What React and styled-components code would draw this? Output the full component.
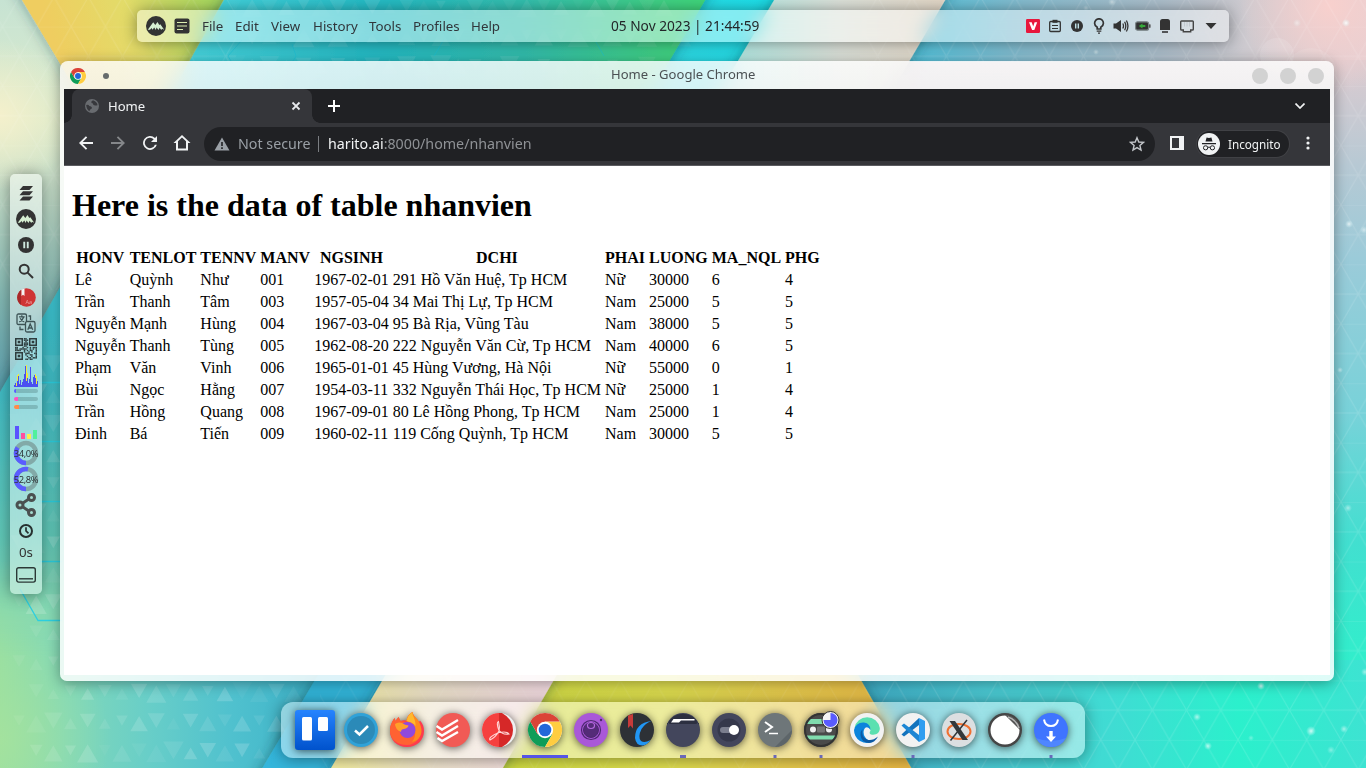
import React from 'react';
import styled, { createGlobalStyle } from 'styled-components';

const ui = '"Noto Sans", "Liberation Sans", sans-serif';
const ink = '#31363b';

const GlobalStyle = createGlobalStyle`
  html, body { margin: 0; height: 100%; overflow: hidden; }
  #root { height: 100%; }
  svg { display: block; }
`;

const Desktop = styled.div`
  position: relative;
  width: 1366px;
  height: 768px;
  overflow: hidden;
  font-family: ${ui};
`;

const Backdrop = styled.svg`
  position: absolute;
  inset: 0;
`;

const Glass = styled.div`
  position: absolute;
  display: flex;
  box-sizing: border-box;
  background: rgba(255, 255, 255, 0.44);
  backdrop-filter: blur(10px);
  box-shadow: 0 1px 16px rgba(0, 0, 0, 0.42);
`;

/* ---------- wallpaper ---------- */

const SIDE = 34.32;
const ROW = 29.72;

const noise = (a, b) => {
  const v = Math.sin(a * 127.1 + b * 311.7) * 43758.5453;
  return v - Math.floor(v);
};

const triangles = (x0, y0, x1, y1) => {
  const out = [];
  let r = 0;
  for (let y = y0; y < y1; y += ROW, r++) {
    const end = x1 - Math.max(0, y - 680) * 0.6;
    for (let x = x0 + (r % 2 ? SIDE / 2 : 0), c = 0; x < end; x += SIDE, c++) {
      const n = noise(r + 3, c + 7);
      const h = 4 + 5.5 * n;
      out.push({ d: `M${x - h * 1.15} ${y + 9 - h}h${h * 2.3}l${-h * 1.15} ${h * 2}z`, o: 0.04 + 0.13 * noise(c, r) });
      const m = noise(c + 11, r + 2);
      const k = 5 + 4.5 * m;
      const cx = x + SIDE / 2;
      out.push({ d: `M${cx - k * 1.15} ${y + 12 + k}h${k * 2.3}l${-k * 1.15} ${-k * 2}z`, o: 0.04 + 0.13 * noise(r, c + 5) });
    }
  }
  return out;
};

const leftTriangles = triangles(19, 355, 292, 768);
const topTriangles = triangles(235, -4, 680, 62);

const stars = [
  [1346, 23, 4, 0.9], [1297, 23, 4, 0.45], [1112, 2, 4, 0.5], [1086, 8, 3, 0.35], [1096, 52, 3, 0.45],
  [1349, 224, 4, 0.7], [1364, 230, 4, 0.5], [1340, 370, 3, 0.55], [1348, 508, 4, 0.5],
  [1261, 686, 4, 0.8], [1197, 717, 4, 0.6], [1208, 746, 4, 0.65], [1311, 731, 5, 0.75], [1344, 729, 4, 0.55],
  [1331, 750, 4, 0.4], [1251, 738, 3, 0.35], [1365, 672, 4, 0.5],
];

const grad = (id, x1, y1, x2, y2, stops) => (
  <linearGradient id={id} gradientUnits="userSpaceOnUse" x1={x1} y1={y1} x2={x2} y2={y2}>
    {stops.map(([o, c]) => <stop key={o} offset={o} stopColor={c} />)}
  </linearGradient>
);

function Wallpaper() {
  return (
    <Backdrop width="1366" height="768" viewBox="0 0 1366 768">
      <defs>
        {grad('wCream', 0, 0, 0, 400, [[0, '#c7e3d3'], [0.3, '#dcebcb'], [0.45, '#c9dfc9'], [0.75, '#83b9b4'], [1, '#5a9fb0']])}
        {grad('wYellow', 60, 60, 215, 10, [[0, '#efcd60'], [0.5, '#e2dc69'], [1, '#a9da60']])}
        {grad('wTeal', 200, 0, 700, 0, [[0, '#45d4de'], [0.35, '#25bcc6'], [0.65, '#33bfae'], [0.9, '#3fd088'], [1, '#3fd77c']])}
        {grad('wCyan', 670, 60, 760, 0, [[0, '#2edbe6'], [1, '#1ee0ea']])}
        {grad('wWhite', 740, 0, 940, 0, [[0, '#b5e8e2'], [0.5, '#dde2da'], [1, '#e3d8c8']])}
        {grad('wRightTop', 910, 0, 1366, 0, [[0, '#52c3dc'], [0.25, '#86bdd0'], [0.55, '#adbfcc'], [0.75, '#cfcacf'], [1, '#e4cfd3']])}
        {grad('wRight', 0, 60, 0, 768, [[0, '#dccbd0'], [0.15, '#b7c9d4'], [0.28, '#9bcbd9'], [0.5, '#78d2d9'], [0.68, '#42dfd0'], [0.86, '#30efcb'], [1, '#40e2d4']])}
        {grad('wLeftLow', 0, 300, 0, 620, [[0, '#3cc3d0'], [0.3, '#42bcc4'], [0.75, '#62c9b8'], [1, '#84d6b2']])}
        {grad('wLowRow', 0, 0, 330, 0, [[0, '#98dfa2'], [0.2, '#82d8b8'], [0.45, '#68cec8'], [0.7, '#50c1ce'], [1, '#3ab0c8']])}
        {grad('wFade', 0, 560, 0, 660, [[0, '#000'], [1, '#fff']])}
        {grad('wBlue', 300, 681, 340, 768, [[0, '#30b6da'], [1, '#36b6dc']])}
        {grad('wPale', 340, 0, 550, 0, [[0, '#f3eca2'], [0.45, '#ede2cc'], [1, '#f1d9e0']])}
        {grad('wGold', 510, 0, 905, 0, [[0, '#d0dc42'], [0.4, '#dedd50'], [0.7, '#e6ca4e'], [1, '#e9b944']])}
        {grad('wLowRight', 860, 0, 1366, 0, [[0, '#3fadc6'], [0.25, '#4bc9d3'], [0.5, '#3fdcd3'], [0.75, '#2bf0cc'], [1, '#3de3d2']])}
        <mask id="wFadeMask"><rect width="1366" height="768" fill="url(#wFade)" /></mask>
        <radialGradient id="wGlow" gradientUnits="userSpaceOnUse" cx="0" cy="115" r="75">
          <stop offset="0" stopColor="#f4f0cc" /><stop offset="1" stopColor="#f4f0cc" stopOpacity="0" />
        </radialGradient>
        <radialGradient id="wRose" gradientUnits="userSpaceOnUse" cx="1330" cy="5" r="90">
          <stop offset="0" stopColor="#f8d0cd" /><stop offset="1" stopColor="#f8d0cd" stopOpacity="0" />
        </radialGradient>
        <radialGradient id="wLime" gradientUnits="userSpaceOnUse" cx="0" cy="740" r="110">
          <stop offset="0" stopColor="#a8e39c" stopOpacity="0.7" /><stop offset="1" stopColor="#a8e39c" stopOpacity="0" />
        </radialGradient>
        <radialGradient id="wStar"><stop offset="0" stopColor="#fff" /><stop offset="1" stopColor="#dff" stopOpacity="0" /></radialGradient>
        <pattern id="wMesh" patternUnits="userSpaceOnUse" x="1341" y="621" width={SIDE} height={ROW * 2}>
          <path
            d={`M0 0H${SIDE}M0 ${ROW}H${SIDE}M0 0L${SIDE} ${ROW * 2}M${SIDE} 0L0 ${ROW * 2}`}
            stroke="#fff" strokeWidth="1" strokeOpacity="0.16" fill="none"
          />
        </pattern>
        <filter id="wShade" x="-20%" y="-20%" width="140%" height="140%">
          <feDropShadow dx="0" dy="0" stdDeviation="7" floodColor="#06343e" floodOpacity="0.42" />
        </filter>
      </defs>
      <rect width="1366" height="768" fill="url(#wRight)" />
      <path d="M890 0H1366V62H890Z" fill="url(#wRightTop)" />
      <path d="M850 660H1366V768H850Z" fill="url(#wLowRight)" />
      <rect x="1334" y="60" width="32" height="560" fill="url(#wRight)" />
      <rect x="1200" y="0" width="166" height="150" fill="url(#wRose)" />
      <path d="M0 0H300V500H0Z" fill="url(#wCream)" />
      <rect y="30" width="90" height="170" fill="url(#wGlow)" />
      <path d="M690 -20H800L700 162H580Z" fill="url(#wCyan)" />
      <g filter="url(#wShade)">
        <path d="M786 -20H957L850 162H678Z" fill="url(#wWhite)" />
      </g>
      <g filter="url(#wShade)">
        <path d="M10 -20H250L140 162H119Z" fill="url(#wYellow)" />
      </g>
      <g filter="url(#wShade)">
        <path d="M235 -20H717L610 162H133Z" fill="url(#wTeal)" />
      </g>
      <g filter="url(#wShade)">
        <path d="M-20 427L90 235H250V600H430V792H-20Z" fill="url(#wLeftLow)" />
      </g>
      <path d="M0 540H400V768H0Z" fill="url(#wLowRow)" mask="url(#wFadeMask)" />
      <rect y="630" width="110" height="138" fill="url(#wLime)" />
      <g filter="url(#wShade)">
        <path d="M339 640H560V792H248Z" fill="url(#wBlue)" />
      </g>
      <g filter="url(#wShade)">
        <path d="M540 640H838L925 792H470Z" fill="url(#wGold)" />
      </g>
      <g filter="url(#wShade)">
        <path d="M406 640H577L489 792H317Z" fill="url(#wPale)" />
      </g>
      <rect x="860" width="506" height="768" fill="url(#wMesh)" opacity="0.85" />
      <rect width="236" height="290" fill="url(#wMesh)" opacity="0.7" />
      <rect x="320" y="660" width="540" height="108" fill="url(#wMesh)" opacity="0.5" />
      {leftTriangles.map((t, i) => <path key={i} d={t.d} fill="#fff" opacity={t.o} />)}
      {topTriangles.map((t, i) => <path key={i} d={t.d} fill="#fff" opacity={t.o * 0.7} />)}
      <path d="M40 382.500H62M40 441.500H62M40 501.500H62M40 561.500H62M20 589L38 620.500H62" stroke="#2ccfe0" strokeWidth="1.300" fill="none" />
      <path d="M242 40L228 56L234 66M292 44L296 56L290 66M446 36L434 56M596 42L604 56" stroke="#17c4dc" strokeOpacity="0.5" fill="none" />
      <circle cx="1277" cy="55" r="17" fill="#fff" opacity="0.13" />
      <circle cx="1311" cy="74" r="26" fill="#fff" opacity="0.1" />
      {stars.map(([x, y, r, o]) => <circle key={`${x}-${y}`} cx={x} cy={y} r={r} fill="url(#wStar)" opacity={o} />)}
    </Backdrop>
  );
}

/* ---------- shared drawings ---------- */

const Mountain = ({ size = 20 }) => (
  <svg width={size} height={size} viewBox="0 0 20 20">
    <circle cx="10" cy="10" r="10" fill="#333" />
    <path d="M1.800 13.800L7.200 6.300L9.300 9L11.500 6L13.300 9L14.300 8.200L18.200 13.800L16 12.800L15.300 14L13.600 11.800L12.600 14L10.500 11.500L9.800 14L8.200 11.600L6.500 13.800L5.600 12L4 13.800Z" fill="#d7efd2" />
  </svg>
);

const PauseDisc = ({ size = 16, tint = '#cfe8de' }) => (
  <svg width={size} height={size} viewBox="0 0 16 16">
    <circle cx="8" cy="8" r="8" fill="#333" />
    <path d="M5.300 4.800h1.900v6.400H5.300zM8.800 4.800h1.900v6.400H8.800z" fill={tint} />
  </svg>
);

const ChromeLogo = ({ size }) => (
  <svg width={size} height={size} viewBox="0 0 48 48">
    <circle cx="24" cy="24" r="24" fill="#fff" />
    <path d="M3.200 12A24 24 0 0 0 24 48L34.400 30L24 24L13.600 30Z" fill="#0f9d58" />
    <path d="M44.800 12A24 24 0 0 1 24 48L34.400 30L24 12Z" fill="#ffcd40" />
    <path d="M3.200 12A24 24 0 0 1 44.800 12H24L13.600 30Z" fill="#db4437" />
    <circle cx="24" cy="24" r="11.500" fill="#fff" />
    <circle cx="24" cy="24" r="8.900" fill="#2367d8" />
  </svg>
);

/* ---------- top panel ---------- */

const TopPanel = styled(Glass)`
  left: 137px;
  top: 10px;
  width: 1092px;
  height: 32px;
  border-radius: 5px;
  align-items: center;
`;

const MenuBar = styled.div`
  display: flex;
  align-items: center;
  flex: 1;
  padding-left: 9px;
`;

const NoteIcon = styled.div`
  margin: 0 12px 0 8px;
`;

const MenuItem = styled.span`
  width: ${(p) => p.$w}px;
  margin-right: 13px;
  font-size: 13.33px;
  line-height: 18px;
  white-space: nowrap;
  color: ${ink};
`;

const Clock = styled.div`
  width: 148px;
  text-align: center;
  font-size: 13.7px;
  line-height: 20px;
  color: #232629;
  white-space: nowrap;
`;

const Tray = styled.div`
  display: flex;
  align-items: center;
  justify-content: flex-end;
  flex: 1;
  padding-right: 5px;
`;

const TrayCell = styled.div`
  display: flex;
  align-items: center;
  justify-content: center;
  width: ${(p) => p.$w || 22}px;
  height: 22px;
`;

const menus = [['File', 20], ['Edit', 23], ['View', 29], ['History', 43], ['Tools', 31], ['Profiles', 45], ['Help', 28]];

function TopBar() {
  return (
    <TopPanel>
      <MenuBar>
        <Mountain />
        <NoteIcon>
          <svg width="16" height="16" viewBox="0 0 16 16">
            <rect x="0.500" y="0.500" width="15" height="15" rx="2" fill="#333" />
            <path d="M3 4.500h10M3 8h10M3 11.500h6" stroke="#dceeb0" strokeWidth="1.200" />
          </svg>
        </NoteIcon>
        {menus.map(([m, w]) => <MenuItem key={m} $w={w}>{m}</MenuItem>)}
      </MenuBar>
      <Clock>05 Nov 2023 | 21:44:59</Clock>
      <Tray>
        <TrayCell>
          <svg width="14" height="14" viewBox="0 0 14 14">
            <rect width="14" height="14" rx="1.200" fill="#e8173c" />
            <path d="M3 3.200h2.700L7.200 7.600L8.600 3.200h2.600L8.300 11H6.100Z" fill="#fff" />
          </svg>
        </TrayCell>
        <TrayCell>
          <svg width="14" height="14" viewBox="0 0 14 14" fill="none" stroke="#333">
            <rect x="1.700" y="2.500" width="10.600" height="10" rx="1" strokeWidth="1.300" />
            <rect x="4.500" y="0.800" width="5" height="3" fill="#333" stroke="none" />
            <path d="M4 6.500h6M4 9.500h6" strokeWidth="1" />
          </svg>
        </TrayCell>
        <TrayCell><PauseDisc size={12} tint="#bfe0e6" /></TrayCell>
        <TrayCell>
          <svg width="12" height="16" viewBox="0 0 12 16" fill="none" stroke="#333" strokeWidth="1.700">
            <path d="M4.200 11V9.300C2.500 8.200 1.600 7 1.600 5.200a4.400 4.400 0 0 1 8.800 0C10.400 7 9.500 8.200 7.800 9.300V11Z" />
            <path d="M3.700 13.200h4.600M5 15.200h2" strokeWidth="1.300" />
          </svg>
        </TrayCell>
        <TrayCell>
          <svg width="16" height="14" viewBox="0 0 16 14">
            <path d="M0.500 4.500H3L8 1V13L3 9.500H0.500Z" fill="#333" />
            <path d="M9.800 4.500Q11.200 7 9.800 9.500M11.600 2.800Q14 7 11.600 11.200M13.400 1.500Q16.500 7 13.400 12.500" fill="none" stroke="#333" strokeWidth="1.300" />
          </svg>
        </TrayCell>
        <TrayCell>
          <svg width="16" height="10" viewBox="0 0 16 10">
            <rect x="0.600" y="0.800" width="13" height="8.400" rx="2" fill="#333" stroke="#7b8588" strokeWidth="1.200" />
            <rect x="14" y="3.200" width="1.600" height="3.600" rx="0.600" fill="#555" />
            <path d="M3.800 5L7.500 2.600V4H10.300V6H7.500V7.400Z" fill="#35a83a" />
          </svg>
        </TrayCell>
        <TrayCell>
          <svg width="12" height="14" viewBox="0 0 12 14" fill="#333">
            <path d="M1 11V2.500Q1 0 3.500 0H8.500Q11 0 11 2.500V11Z" />
            <rect x="3" y="12.200" width="6" height="1.600" />
          </svg>
        </TrayCell>
        <TrayCell>
          <svg width="14" height="13" viewBox="0 0 14 13">
            <path d="M1.500 1h11q0.800 0 0.800 0.800v7.400q0 0.800-.8.800h-1.800v1.800h-7.400v-1.800h-1.800q-.8 0-.8-.8v-7.400q0-.8.8-.8z" fill="none" stroke="#444" strokeWidth="1.400" />
            <path d="M4.500 2v4.500M7 2v4.500M9.500 2v4.500" stroke="#c2c8ce" strokeWidth="1" />
          </svg>
        </TrayCell>
        <TrayCell $w={26}>
          <svg width="12" height="6" viewBox="0 0 12 6"><path d="M0.500 0h11L6 6Z" fill="#333" /></svg>
        </TrayCell>
      </Tray>
    </TopPanel>
  );
}

/* ---------- left panel ---------- */

const SidePanel = styled(Glass)`
  left: 10px;
  top: 174px;
  width: 32px;
  height: 420px;
  padding: 6px 0;
  flex-direction: column;
  align-items: center;
  border-radius: 5px;
`;

const SideCell = styled.div`
  display: flex;
  align-items: center;
  justify-content: center;
  width: 26px;
  height: 26px;
  flex: none;
`;

const Meters = styled(SideCell)`
  flex-direction: column;
  justify-content: flex-start;
  padding-top: 1px;
  box-sizing: border-box;
  gap: 4px;
`;

const Meter = styled.div`
  width: 24px;
  height: 4px;
  border-radius: 2px;
  background: linear-gradient(90deg, ${(p) => p.$c} ${(p) => p.$v}px, rgba(80, 125, 125, 0.36) ${(p) => p.$v}px);
`;

const BarCell = styled(SideCell)`
  align-items: flex-end;
  justify-content: flex-start;
  gap: 2px;
  width: 23px;
  height: 25px;
  margin-bottom: 1px;
`;

const Bar = styled.div`
  width: 4px;
  height: ${(p) => p.$h}px;
  background: ${(p) => p.$c};
`;

const GaugeBox = styled(SideCell)`
  position: relative;
`;

const GaugeText = styled.span`
  position: absolute;
  inset: 0;
  display: flex;
  align-items: center;
  justify-content: center;
  font-size: 9.4px;
  letter-spacing: -0.35px;
  color: #2e3336;
`;

const Seconds = styled.div`
  height: 18px;
  font-size: 13.33px;
  line-height: 17px;
  color: #333;
`;

function Gauge({ value, label }) {
  const len = 2 * Math.PI * 10;
  return (
    <GaugeBox>
      <svg width="26" height="26" viewBox="0 0 26 26" fill="none" strokeWidth="4.500">
        <circle cx="13" cy="13" r="10" stroke="#82aaa8" />
        <circle cx="13" cy="13" r="10" stroke="#5a5cff" strokeDasharray={`${len * value} ${len}`} transform="rotate(90 13 13)" />
      </svg>
      <GaugeText>{label}</GaugeText>
    </GaugeBox>
  );
}

const qrModules = [];
for (let r = 0; r < 15; r++) {
  for (let c = 0; c < 15; c++) {
    const corner = (r < 6 && c < 6) || (r < 6 && c > 8) || (r > 8 && c < 6);
    if (!corner && noise(r + 1, c + 1) > 0.48) qrModules.push([c, r]);
  }
}

const cpu = [3, 5, 2, 7, 12, 4, 8, 3, 6, 9, 14, 22, 7, 10, 5, 9, 21, 6, 4, 11, 13, 10, 4, 7];

function SideBar() {
  return (
    <SidePanel>
      <SideCell>
        <svg width="14" height="15" viewBox="0 0 14 15" fill="#333">
          <path d="M4 0H14L10.500 4H0.500ZM4 5.300H14L10.500 9.300H0.500ZM4 10.600H14L10.500 14.600H0.500Z" />
        </svg>
      </SideCell>
      <SideCell><Mountain /></SideCell>
      <SideCell><PauseDisc /></SideCell>
      <SideCell>
        <svg width="16" height="16" viewBox="0 0 16 16" fill="none" stroke="#333" strokeWidth="2">
          <circle cx="6.200" cy="6.200" r="4.500" /><path d="M9.600 9.600L15 15" />
        </svg>
      </SideCell>
      <SideCell>
        <svg width="19" height="19" viewBox="0 0 19 19">
          <circle cx="9.500" cy="9.500" r="9.300" fill="#cf3535" />
          <path d="M4 2Q0.200 5 0.200 9.500T4 17Z" fill="#a82828" />
          <path d="M4.500 1.500L7.500 0.500V8L6 6.800L4.500 8Z" fill="#f4f4f4" />
          <text x="8.600" y="15.500" fontFamily="Noto Sans" fontSize="5.500" fill="#eda0a0">Aa</text>
        </svg>
      </SideCell>
      <SideCell>
        <svg width="20" height="20" viewBox="0 0 20 20" fill="none" stroke="#3d5355" strokeWidth="1.300">
          <path d="M9 11.500H2.500Q1 11.500 1 10V2.500Q1 1 2.500 1H9Q10.500 1 10.500 2.500V8" />
          <path d="M3 3.800H8.700M5.800 2.300V3.800M7.600 4.200Q6.500 7.500 3.200 9M4.200 5.300Q5.500 8 8.300 9M12.500 3H14.500V7M4 13.500V16.500H7.500" />
          <rect x="9.500" y="8.500" width="9.500" height="10.500" rx="1.500" />
          <path d="M11.800 16.800L14.200 11L16.700 16.800M12.700 15H15.800" />
        </svg>
      </SideCell>
      <SideCell>
        <svg width="22" height="22" viewBox="0 0 22 22" fill="#2e3c3e">
          {[[0, 0], [14, 0], [0, 14]].map(([x, y]) => (
            <path key={`${x}-${y}`} fillRule="evenodd" d={`M${x} ${y}h8v8h-8zM${x + 1.500} ${y + 1.500}v5h5v-5zM${x + 2.700} ${y + 2.700}h2.600v2.600h-2.600z`} />
          ))}
          {qrModules.map(([x, y]) => <rect key={`${x}-${y}`} x={x * 1.467} y={y * 1.467} width="1.467" height="1.467" />)}
        </svg>
      </SideCell>
      <SideCell>
        <svg width="24" height="24" viewBox="0 0 24 24" shapeRendering="crispEdges">
          {[[3, 12], [4, 13], [12, 22], [13, 14], [21, 13], [22, 11], [2, 4], [19, 5]].map(([x, h]) => (
            <rect key={x} x={x} y={24 - h} width="1" height={h} fill="#f0ea3c" />
          ))}
          {cpu.map((h, i) => <rect key={i} x={i} y={24 - h + 1} width="1" height={h} fill="#4b4ff0" />)}
        </svg>
      </SideCell>
      <Meters>
        <Meter $c="#5a5cff" $v={2} />
        <Meter $c="#ff4fc0" $v={4} />
        <Meter $c="#ff8a4a" $v={5} />
      </Meters>
      <BarCell>
        <Bar $h={13} $c="#5a52ff" />
        <Bar $h={6} $c="#ff4fa0" />
        <Bar $h={5} $c="#fdf04c" />
        <Bar $h={9} $c="#50f09c" />
      </BarCell>
      <Gauge value={0.34} label="34,0%" />
      <Gauge value={0.528} label="52,8%" />
      <SideCell>
        <svg width="22" height="24" viewBox="0 0 22 24" fill="none" stroke="#4a5050" strokeWidth="3">
          <path d="M16 4.500L5 12L16 19.500" strokeWidth="2.800" />
          <circle cx="16.500" cy="4.500" r="3" fill="#a5dcd0" /><circle cx="5" cy="12" r="3" fill="#a5dcd0" /><circle cx="16.500" cy="19.500" r="3" fill="#a5dcd0" />
        </svg>
      </SideCell>
      <SideCell>
        <svg width="14" height="14" viewBox="0 0 14 14" fill="none" stroke="#26302f" strokeWidth="2">
          <circle cx="7" cy="7" r="6" /><path d="M7 3.300V7L9.500 9.300" strokeWidth="1.700" />
        </svg>
      </SideCell>
      <Seconds>0s</Seconds>
      <SideCell>
        <svg width="20" height="16" viewBox="0 0 20 16" fill="none" stroke="#2b3836" strokeWidth="1.400">
          <rect x="0.700" y="0.700" width="18.600" height="14.400" rx="2" /><path d="M3 11.800H17" />
        </svg>
      </SideCell>
    </SidePanel>
  );
}

/* ---------- browser window ---------- */

const Window = styled.div`
  position: absolute;
  left: 60px;
  top: 61px;
  width: 1274px;
  height: 620px;
  box-sizing: border-box;
  display: flex;
  flex-direction: column;
  padding: 0 4px 6px;
  border-radius: 8px 8px 7px 7px;
  background: linear-gradient(rgba(252, 252, 252, 0.82), rgba(248, 248, 248, 0.82) 28px, rgba(255, 255, 255, 0.84) 60px);
  backdrop-filter: blur(12px);
  box-shadow: 0 2px 14px rgba(0, 0, 0, 0.36);
`;

const TitleBar = styled.div`
  display: flex;
  align-items: center;
  height: 28px;
  flex: none;
`;

const TitleLeft = styled.div`
  display: flex;
  align-items: center;
  gap: 17px;
  width: 541px;
  padding: 2px 0 0 6px;
`;

const Dot = styled.div`
  width: 6px;
  height: 6px;
  border-radius: 50%;
  background: #666b6c;
`;

const Title = styled.div`
  flex: 1;
  margin-top: -2px;
  font-size: 13.05px;
  line-height: 18px;
  color: #4b5053;
`;

const TitleButtons = styled.div`
  display: flex;
  justify-content: flex-end;
  gap: 12px;
  padding: 2px 6px 0 0;
`;

const RoundButton = styled.div`
  width: 16px;
  height: 16px;
  border-radius: 50%;
  background: #d2d2d2;
`;

const TabStrip = styled.div`
  display: flex;
  align-items: center;
  height: 34px;
  flex: none;
  padding-left: 8px;
  background: #202124;
`;

const Tab = styled.div`
  position: relative;
  display: flex;
  align-items: center;
  box-sizing: border-box;
  width: 240px;
  height: 34px;
  padding: 0 10px 0 13px;
  border-radius: 8px 8px 0 0;
  background: #35363a;
  color: #f1f3f4;
  font-size: 13.1px;

  &::before, &::after {
    content: '';
    position: absolute;
    bottom: 0;
    width: 8px;
    height: 8px;
  }
  &::before { left: -8px; background: radial-gradient(circle at 0 0, #202124 7.5px, #35363a 8px); }
  &::after { right: -8px; background: radial-gradient(circle at 100% 0, #202124 7.5px, #35363a 8px); }
`;

const TabLabel = styled.span`
  flex: 1;
  padding-left: 9px;
`;

const StripButton = styled.div`
  margin-left: ${(p) => p.$ml};
  margin-right: ${(p) => p.$mr || 0};
`;

const Toolbar = styled.div`
  display: flex;
  align-items: center;
  height: 42px;
  flex: none;
  background: #35363a;
  border-bottom: 1px solid #5b5c60;
`;

const NavButtons = styled.div`
  display: flex;
  gap: 12px;
  padding: 0 12px 2px;
`;

const NavSlot = styled.div`
  width: 20px;
  height: 20px;
`;

const Omnibox = styled.div`
  display: flex;
  align-items: center;
  box-sizing: border-box;
  width: 951px;
  height: 34px;
  padding: 0 10px;
  border-radius: 17px;
  background: #202124;
  color: #9aa0a6;
  font-size: 14.25px;
`;

const SecurityNote = styled.span`
  margin: -2px 0 0 8px;
  width: 72px;
  white-space: nowrap;
`;

const Divider = styled.div`
  width: 1px;
  height: 16px;
  margin: 0 9px 0 8px;
  background: #7b7e82;
`;

const Url = styled.span`
  flex: 1;
  margin-top: -2px;
  color: #8f9296;
`;

const Host = styled.span`
  color: #f1f3f4;
`;

const IncognitoChip = styled.div`
  display: flex;
  align-items: center;
  box-sizing: border-box;
  width: 92px;
  height: 26px;
  margin-left: 13px;
  padding-left: 1px;
  gap: 8px;
  border-radius: 13px;
  background: #202124;
  box-shadow: 0 0 0 1px #404145;
  color: #f1f3f4;
  font-size: 11.7px;
`;

const Page = styled.div`
  flex: 1;
  background: #fff;
  color: #000;
  padding: 0 8px;
  font-family: "Liberation Serif", "Times New Roman", serif;
  font-size: 16px;
`;

const Heading = styled.h1`
  margin: 0;
  padding: 21px 0 22px;
  font-size: 32px;
  line-height: 37px;
  font-weight: bold;
`;

const Table = styled.table`
  border-spacing: 2px;
  line-height: 18px;
  white-space: nowrap;

  th, td { padding: 1px; }
  td { text-align: left; }
`;

const columns = ['HONV', 'TENLOT', 'TENNV', 'MANV', 'NGSINH', 'DCHI', 'PHAI', 'LUONG', 'MA_NQL', 'PHG'];
const rows = [
  ['Lê', 'Quỳnh', 'Như', '001', '1967-02-01', '291 Hồ Văn Huệ, Tp HCM', 'Nữ', '30000', '6', '4'],
  ['Trần', 'Thanh', 'Tâm', '003', '1957-05-04', '34 Mai Thị Lự, Tp HCM', 'Nam', '25000', '5', '5'],
  ['Nguyễn', 'Mạnh', 'Hùng', '004', '1967-03-04', '95 Bà Rịa, Vũng Tàu', 'Nam', '38000', '5', '5'],
  ['Nguyễn', 'Thanh', 'Tùng', '005', '1962-08-20', '222 Nguyễn Văn Cừ, Tp HCM', 'Nam', '40000', '6', '5'],
  ['Phạm', 'Văn', 'Vinh', '006', '1965-01-01', '45 Hùng Vương, Hà Nội', 'Nữ', '55000', '0', '1'],
  ['Bùi', 'Ngọc', 'Hằng', '007', '1954-03-11', '332 Nguyễn Thái Học, Tp HCM', 'Nữ', '25000', '1', '4'],
  ['Trần', 'Hồng', 'Quang', '008', '1967-09-01', '80 Lê Hồng Phong, Tp HCM', 'Nam', '25000', '1', '4'],
  ['Đinh', 'Bá', 'Tiến', '009', '1960-02-11', '119 Cống Quỳnh, Tp HCM', 'Nam', '30000', '5', '5'],
];

const navPaths = [
  ['#f1f3f4', 'M17 9H6.700L11.200 4.500L9.900 3.200L3 10L9.900 16.800L11.200 15.500L6.700 11H17Z'],
  ['#85878a', 'M3 9H13.300L8.800 4.500L10.100 3.200L17 10L10.100 16.800L8.800 15.500L13.300 11H3Z'],
  ['#f1f3f4', 'M15 5A7 7 0 1 0 16.800 11.800H14.900A5.200 5.200 0 1 1 13.700 6.300L11 9H17V3Z'],
  ['#f1f3f4', 'M10 2L1.500 10H4V17.500H16V10H18.500ZM10 4.500L14 8.300V15.500H6V8.300Z'],
];

function Browser() {
  return (
    <Window>
      <TitleBar>
        <TitleLeft><ChromeLogo size={16} /><Dot /></TitleLeft>
        <Title>Home - Google Chrome</Title>
        <TitleButtons><RoundButton /><RoundButton /><RoundButton /></TitleButtons>
      </TitleBar>
      <TabStrip>
        <Tab>
          <svg width="14" height="14" viewBox="0 0 14 14">
            <circle cx="7" cy="7" r="7" fill="#696c70" />
            <path d="M1.200 6Q3.500 5.300 4.300 7Q6.500 7 7 8.800Q6.800 10 5.500 10.300Q4.500 11.500 4.500 12.200Q1.500 10.500 1.200 6ZM8 1.200Q5.500 2.500 6.500 4Q8.500 4.200 8.300 5.800Q9.500 7.200 12.500 6.200Q12.500 3 8 1.200Z" fill="#37383c" />
          </svg>
          <TabLabel>Home</TabLabel>
          <svg width="12" height="12" viewBox="0 0 12 12"><path d="M2.500 2.500L9.500 9.500M9.500 2.500L2.500 9.500" stroke="#e8eaed" strokeWidth="1.800" /></svg>
        </Tab>
        <StripButton $ml="16px">
          <svg width="12" height="12" viewBox="0 0 12 12"><path d="M6 0V12M0 6H12" stroke="#fff" strokeWidth="2" /></svg>
        </StripButton>
        <StripButton $ml="auto" $mr="25px">
          <svg width="10" height="6" viewBox="0 0 10 6"><path d="M0.500 0.500L5 5L9.500 0.500" fill="none" stroke="#f1f3f4" strokeWidth="1.700" /></svg>
        </StripButton>
      </TabStrip>
      <Toolbar>
        <NavButtons>
          {navPaths.map(([c, d]) => (
            <NavSlot key={d}><svg width="20" height="20" viewBox="0 0 20 20"><path d={d} fill={c} fillRule="evenodd" /></svg></NavSlot>
          ))}
        </NavButtons>
        <Omnibox>
          <svg width="16" height="14" viewBox="0 0 16 14">
            <path d="M8 0.500L15.500 13.500H0.500Z" fill="#9aa0a6" /><path d="M8 5V9M8 10.300V12" stroke="#202124" strokeWidth="1.600" />
          </svg>
          <SecurityNote>Not secure</SecurityNote>
          <Divider />
          <Url><Host>harito.ai</Host>:8000/home/nhanvien</Url>
          <svg width="16" height="16" viewBox="0 0 16 16">
            <path d="M8 1.700L9.800 6L14.500 6.400L10.900 9.500L12 14.100L8 11.600L4 14.100L5.100 9.500L1.500 6.400L6.200 6Z" fill="none" stroke="#c3c6ca" strokeWidth="1.400" />
          </svg>
        </Omnibox>
        <StripButton $ml="15px">
          <svg width="14" height="16" viewBox="0 0 14 16"><path d="M0 0H14V14H0ZM2 2V12H9V2Z" fill="#f1f3f4" fillRule="evenodd" /></svg>
        </StripButton>
        <IncognitoChip>
          <svg width="22" height="22" viewBox="0 0 22 22">
            <circle cx="11" cy="11" r="11" fill="#f1f3f4" />
            <path d="M7.500 8.500L8.600 4.600Q11 5.400 13.400 4.600L14.500 8.500ZM4 10H18V11.200H4Z" fill="#202124" />
            <g fill="none" stroke="#202124" strokeWidth="1"><rect x="5.500" y="12.800" width="4.200" height="4" rx="1.800" /><rect x="12.300" y="12.800" width="4.200" height="4" rx="1.800" /><path d="M9.700 14.500Q11 13.600 12.300 14.500" /></g>
          </svg>
          Incognito
        </IncognitoChip>
        <StripButton $ml="17px">
          <svg width="4" height="16" viewBox="0 0 4 16" fill="#f1f3f4"><circle cx="2" cy="2" r="1.600" /><circle cx="2" cy="7" r="1.600" /><circle cx="2" cy="12" r="1.600" /></svg>
        </StripButton>
      </Toolbar>
      <Page>
        <Heading>Here is the data of table nhanvien</Heading>
        <Table>
          <thead><tr>{columns.map((c) => <th key={c}>{c}</th>)}</tr></thead>
          <tbody>
            {rows.map((r) => <tr key={r[3]}>{r.map((v, i) => <td key={i}>{v}</td>)}</tr>)}
          </tbody>
        </Table>
      </Page>
    </Window>
  );
}

/* ---------- dock ---------- */

const DockPanel = styled(Glass)`
  left: 281px;
  top: 702px;
  width: 804px;
  height: 56px;
  padding: 0 11px;
  border-radius: 12px;
`;

const DockCell = styled.div`
  position: relative;
  display: flex;
  align-items: center;
  justify-content: center;
  width: 46px;
  height: 56px;

  svg {
    overflow: visible;
    filter: drop-shadow(0 1px 4px rgba(0, 0, 0, 0.65));
  }
`;

const Running = styled.div`
  position: absolute;
  bottom: 0;
  left: 50%;
  width: ${(p) => p.$w}px;
  height: 3px;
  transform: translateX(-50%);
  background: ${(p) => (p.$w > 10 ? '#5555e6' : '#6a68b8')};
`;

const Disc = ({ fill, children }) => (
  <svg width="34" height="34" viewBox="0 0 34 34"><circle cx="17" cy="17" r="17" fill={fill} />{children}</svg>
);

const apps = [
  ['boards', 0, (
    <svg width="40" height="40" viewBox="0 0 40 40">
      <defs><linearGradient id="board" x2="0" y2="1"><stop offset="0" stopColor="#2684ff" /><stop offset="1" stopColor="#0052cc" /></linearGradient></defs>
      <rect width="40" height="40" rx="3" fill="url(#board)" />
      <rect x="7" y="7" width="10" height="23.500" rx="1.500" fill="#fff" /><rect x="23" y="7" width="10" height="14" rx="1.500" fill="#fff" />
    </svg>
  )],
  ['tasks', 0, (
    <Disc fill="#30a2d8"><circle cx="17" cy="17" r="14" fill="#2b8ab8" /><path d="M11 17.500L15.500 21.500L24 13" fill="none" stroke="#fff" strokeWidth="2.500" /></Disc>
  )],
  ['firefox', 0, (
    <svg width="34" height="34" viewBox="0 0 34 34">
      <path d="M17 34C7 34 0 27 0 18C0 12 2.500 8 4.500 5L5.500 8L8.500 4L10.500 8C13 7 15 7 17 8C16.500 4 19 1 22.500 -1C23 3 26 4.500 29 9L30 7.500C33 11 34 14 34 18C34 27 27 34 17 34Z" fill="#ff3b4d" />
      <path d="M17 32C7 32 0 26 0 18C0 12 2.500 8 4.500 5L5.500 8L8.500 4L10.500 8L22 10L31 14C32 24 26 32 17 32Z" fill="#ff6232" />
      <path d="M16 8C17 4 19 1 22.500 -1C23 4 29 5 31 14C33 21 29 28 22 29C27 23 27 13 16 8Z" fill="#ff8a1f" />
      <path d="M22.500 -1C22 3 26 6 25.500 13C23 9 19 9 17 8C17 4 19 1 22.500 -1Z" fill="#ffb92e" />
      <circle cx="17.500" cy="17" r="8" fill="#9149dd" />
      <path d="M5 11Q8 8.500 12 10Q15 12 18.500 12.500Q18 15 14 16Q11 16 11 19Q5 16 5 11Z" fill="#ffa02a" />
    </svg>
  )],
  ['todo', 0, (
    <Disc fill="#f15a55">
      <path d="M0.500 13L6 16.500L22 7M0.500 19L6 22.500L22 13M1.500 25L6 28L22 19" fill="none" stroke="#fff" strokeWidth="2.400" />
    </Disc>
  )],
  ['pdf', 0, (
    <Disc fill="#efefef">
      <path d="M17 0A17 17 0 0 0 17 34Z" fill="#f5403f" /><path d="M17 0H20Q31 6 31 17T20 34H17Z" fill="#d62828" />
      <path d="M16.500 8.500Q18 14 17 18Q14 24 8 27Q6 24 17 19.500Q25 18 27 21Q20 22 16.800 17Q14 9 16.500 8.500Z" fill="none" stroke="#ffd5d5" strokeWidth="1.100" />
    </Disc>
  )],
  ['chrome', 46, <ChromeLogo size={34} />],
  ['camera', 0, (
    <Disc fill="#a958d8">
      <g fill="none" stroke="#4d2870"><circle cx="17" cy="17" r="9.500" strokeWidth="1.200" /><circle cx="17" cy="17" r="7.500" fill="#542b78" /></g>
      <ellipse cx="17" cy="12.500" rx="3.500" ry="3" fill="none" stroke="#b668e0" strokeWidth="1.200" /><circle cx="27" cy="7" r="1.200" fill="#4d2870" />
    </Disc>
  )],
  ['reader', 0, (
    <Disc fill="#2d3136">
      <path d="M8 2.500L13 1V15.500L10.500 12.500L8 15Z" fill="#c63b3b" />
      <path d="M31.500 8Q15 10 15 25Q16 32.500 22.500 32.500Q27 32 30.500 27Q24.500 30.500 21 28Q17.500 24 21.500 16Q25.500 10 31.500 8Z" fill="#2196f3" />
    </Disc>
  )],
  ['files', 6, (
    <Disc fill="#43465c"><path d="M3 11A15 15 0 0 1 31 11Z" fill="#2c2f40" /><path d="M1 12A17 17 0 0 1 33 12V10H1Z" fill="#2c2f40" /><path d="M5 9.500L7.500 6H28.500V7.500H15L13 9.500Z" fill="#fff" /></Disc>
  )],
  ['settings', 0, (
    <Disc fill="#43465c"><circle cx="17" cy="17" r="11.500" fill="#35384b" /><rect x="8" y="14" width="16" height="6" rx="3" fill="#7b7e8e" /><circle cx="22" cy="17" r="5" fill="#fff" /></Disc>
  )],
  ['terminal', 3, (
    <Disc fill="#6e7679"><path d="M34 17A17 17 0 0 1 17 34Z" fill="#5d6569" /><path d="M7 9L14 14L7 19" fill="none" stroke="#fff" strokeWidth="2" /><path d="M11 20.500H20" stroke="#fff" strokeWidth="1.500" /></Disc>
  )],
  ['player', 3, (
    <Disc fill="#4a4a4a">
      <path d="M4 6H30L33 11H1ZM1 22.500H33L31 26.500H3Z" fill="#80dcae" />
      <circle cx="9" cy="16.500" r="3" fill="#f0f0f0" /><rect x="13" y="13.500" width="8" height="6" rx="1" fill="#777" /><circle cx="25" cy="16.500" r="3" fill="#f0f0f0" />
      <circle cx="17" cy="17" r="16" fill="none" stroke="#333" strokeWidth="2" />
      <circle cx="26.500" cy="7" r="8.500" fill="#f4f4f4" stroke="#333" strokeWidth="1" /><path d="M26.500 7V0A7 7 0 1 1 19.500 7Z" fill="#5a5cff" />
    </Disc>
  )],
  ['edge', 0, (
    <Disc fill="#f2f2f2">
      <path d="M4.500 15A12.800 12.800 0 0 1 29.800 15C30 20 26 22.500 21 21.500Q18.500 20.500 20.500 17.500Q20 12 14 11Q8 10.500 4.500 15Z" fill="#5be0b0" />
      <path d="M4 17Q6 9 14 9.500Q20.500 10.500 20.500 17Q18 13 15 15Q12 19 15 24Q18 29 24 28Q17 32 10 28Q4 24 4 17Z" fill="#0b84dc" />
      <path d="M12.500 16Q11 24 17 26.500Q22 28.500 28 23.500Q25 29.500 19 30Q11 29 10.500 22Q10.500 18 12.500 16Z" fill="#0c59a4" />
    </Disc>
  )],
  ['code', 3, (
    <Disc fill="#f2f2f2">
      <path d="M23 5L29 8V26L23 29Z" fill="#2f9df0" /><path d="M23 5V12L8 23.500L5.500 21.500Z" fill="#1273bd" /><path d="M23 29V22L8 10.500L5.500 12.500Z" fill="#1d86d4" />
    </Disc>
  )],
  ['xorg', 0, (
    <Disc fill="#dcdfe1">
      <ellipse cx="17" cy="18.500" rx="11.500" ry="7.500" fill="none" stroke="#f07030" strokeWidth="2" />
      <path d="M7.500 8H13L26 27H20.500Z" fill="#33373a" /><path d="M25 7L8.500 27.500" stroke="#33373a" strokeWidth="1.500" />
    </Disc>
  )],
  ['notes', 0, (
    <Disc fill="#454545"><circle cx="17" cy="17" r="14.500" fill="#fff" /><path d="M17 2L32 17A15 15 0 0 0 17 2Z" fill="#555" /><path d="M20 4Q28 6.500 31 15" stroke="#b5b5b5" strokeWidth="1.500" fill="none" /></Disc>
  )],
  ['download', 3, (
    <Disc fill="#3f74ff"><path d="M2 25Q17 31 32 25A17 17 0 0 1 2 25Z" fill="#4f86ff" /><path d="M10 6.500Q11 13 17 13T24 6.500" fill="none" stroke="#fff" strokeWidth="2" /><path d="M15.300 18H18.700V23.500H22L17 29L12 23.500H15.300Z" fill="#fff" /></Disc>
  )],
];

function Dock() {
  return (
    <DockPanel>
      {apps.map(([name, w, icon]) => (
        <DockCell key={name}>{icon}{w > 0 && <Running $w={w} />}</DockCell>
      ))}
    </DockPanel>
  );
}

export default function App() {
  return (
    <>
      <GlobalStyle />
      <Desktop>
        <Wallpaper />
        <SideBar />
        <TopBar />
        <Browser />
        <Dock />
      </Desktop>
    </>
  );
}
